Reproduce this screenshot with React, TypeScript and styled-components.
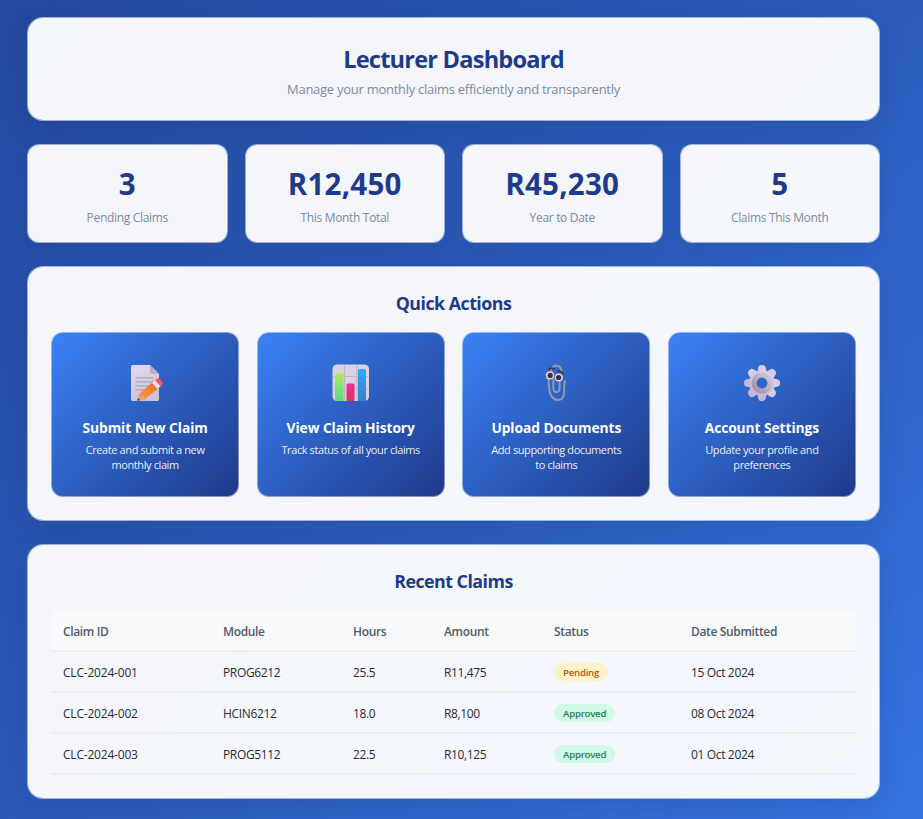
import React from "react";
import styled, { createGlobalStyle } from "styled-components";

const GlobalStyle = createGlobalStyle`
  *, *::before, *::after { box-sizing: border-box; }
  body {
    margin: 0;
    font-family: "Segoe UI", "Open Sans", "Noto Sans", sans-serif;
    color: #2b2b2f;
  }
  h1, h2, h3, p { margin: 0; }
`;

const Page = styled.main`
  height: 819px;
  overflow: hidden;
  padding: 17px 43px 0 27px;
  display: flex;
  flex-direction: column;
  gap: 23px;
  background: linear-gradient(135deg, #24499f 0%, #2b5bbb 50%, #3574e2 100%);
`;

const Surface = styled.section`
  flex: none;
  border: 1px solid rgba(255, 255, 255, 0.55);
  border-radius: 16px;
  background: rgba(255, 255, 255, 0.95);
  background-clip: padding-box;
  box-shadow: 0 7px 28px rgba(0, 0, 0, 0.1);
  text-align: center;
`;

const Header = styled(Surface)`
  height: 104px;
  padding-top: 24px;
`;

const Title = styled.h1`
  font-size: 23.6px;
  line-height: 34px;
  font-weight: 700;
  letter-spacing: -0.8px;
  color: #1e3a8a;
`;

const Subtitle = styled.p`
  margin-top: 3px;
  font-size: 13px;
  line-height: 20px;
  letter-spacing: -0.27px;
  color: #7d8b9d;
`;

const Stats = styled.div`
  flex: none;
  display: grid;
  grid-template-columns: repeat(4, 1fr);
  gap: 17px;
`;

const StatCard = styled(Surface)`
  height: 99px;
  padding-top: 19px;
  border-radius: 12px;
  box-shadow: 0 4px 16px rgba(0, 0, 0, 0.08);
`;

const StatValue = styled.div`
  font-size: 29.5px;
  line-height: 40px;
  font-weight: 700;
  letter-spacing: 0.25px;
  color: #1e3a8a;
`;

const StatLabel = styled.div`
  margin-top: 5px;
  font-size: 12px;
  line-height: 18px;
  letter-spacing: -0.32px;
  color: #7d8b9d;
`;

const Panel = styled(Surface)`
  height: 255px;
  padding: 23px;
`;

const PanelTitle = styled.h2`
  height: 26px;
  font-size: 17.8px;
  line-height: 26px;
  font-weight: 700;
  letter-spacing: -0.5px;
  color: #1e3a8a;
`;

const Actions = styled.div`
  display: grid;
  grid-template-columns: repeat(4, 1fr);
  gap: 17.33px;
  margin-top: 16px;
`;

const ActionCard = styled.a`
  display: flex;
  flex-direction: column;
  align-items: center;
  height: 165px;
  padding: 32px 23px 0;
  border: 1px solid rgba(255, 255, 255, 0.45);
  border-radius: 12px;
  background: linear-gradient(135deg, #3b82f6 0%, #1e3a8a 100%) border-box;
  color: #fff;
`;

const ActionTitle = styled.h3`
  margin-top: 17px;
  font-size: 13.8px;
  line-height: 20px;
  font-weight: 700;
  letter-spacing: -0.08px;
  white-space: nowrap;
`;

const ActionText = styled.p`
  margin-top: 4px;
  font-size: 11px;
  line-height: 15px;
  letter-spacing: -0.4px;
  color: rgba(255, 255, 255, 0.92);
`;

const Table = styled.table`
  width: 100%;
  margin-top: 16px;
  border-spacing: 0;
  table-layout: fixed;
  text-align: left;
  font-size: 12px;
  line-height: 16px;
`;

const Column = styled.col<{ $width: number }>`
  width: ${(p) => p.$width}px;
`;

const HeadCell = styled.th`
  height: 42px;
  padding: 3px 12px 0;
  border-bottom: 2px solid #ebeef3;
  background: #f9fafb;
  background-clip: padding-box;
  font-weight: 600;
  letter-spacing: -0.35px;
  color: #505a69;
`;

const Cell = styled.td`
  height: 41px;
  padding: 3px 12px 0;
  border-bottom: 2px solid #ebeef3;
  letter-spacing: -0.35px;

  &:first-child {
    letter-spacing: -0.2px;
  }
`;

const Badge = styled.span<{ $approved: boolean }>`
  display: block;
  width: fit-content;
  height: 18px;
  margin-top: -2px;
  padding: 0 9px;
  border-radius: 9px;
  font-size: 9.7px;
  line-height: 19px;
  letter-spacing: -0.3px;
  font-weight: 600;
  background: ${(p) => (p.$approved ? "#d1fae5" : "#fef3c7")};
  color: ${(p) => (p.$approved ? "#2a7a62" : "#a65a26")};
  letter-spacing: -0.27px;
`;

const IconSvg = styled.svg`
  flex: none;
  display: block;
  width: 36px;
  height: 36px;
  overflow: visible;
`;

const MemoIcon = () => (
  <IconSvg viewBox="0 0 36 36">
    <defs>
      <linearGradient id="paper" x1="0" y1="0" x2="0.3" y2="1">
        <stop offset="0" stopColor="#e2dcea" />
        <stop offset="1" stopColor="#cdc2d6" />
      </linearGradient>
      <linearGradient id="pencil" x1="0" y1="1" x2="1" y2="0">
        <stop offset="0" stopColor="#ffa145" />
        <stop offset="1" stopColor="#f2612d" />
      </linearGradient>
    </defs>
    <path d="M5.500 0H23L32 9v25.500q0 1.500-1.500 1.500H5.500Q4 36 4 34.500V1.500Q4 0 5.500 0Z" fill="url(#paper)" />
    <path d="M23 0l9 9h-7q-2 0-2-2Z" fill="#b7afc2" />
    <path d="M9 12.900h16.500M9 16.900h17M9 20.900h15M9 24.900h10" stroke="#aaa3b3" strokeWidth="1.400" strokeLinecap="round" />
    <path d="M10.500 35.500l2.100-7L26.500 16.500l5.500 6.200L17.500 34.500Z" fill="url(#pencil)" />
    <path d="M12.600 28.500L10.500 35.500l7-1-1.300-3.500-2.500-.2Z" fill="#dca776" />
    <path d="M11.100 33l-.900 2.700 2.800-.4Z" fill="#503044" />
    <path d="M25 17.800l3.300-2.800 5.500 6.100-3.400 2.900Z" fill="#e9dfed" />
    <path d="M28.100 15.200l2-1.600q1.300-1 2.500.2l3 3.500q1 1.200-.2 2.200l-2 1.700Z" fill="#f45b55" />
  </IconSvg>
);

const ChartIcon = () => (
  <IconSvg viewBox="0 0 36 36">
    <defs>
      <linearGradient id="barGreen" x1="0" y1="0" x2="0" y2="1">
        <stop offset="0" stopColor="#b0ea5e" />
        <stop offset="1" stopColor="#5bd58c" />
      </linearGradient>
      <linearGradient id="barRed" x1="0" y1="0" x2="0" y2="1">
        <stop offset="0" stopColor="#ef2b91" />
        <stop offset="1" stopColor="#d83861" />
      </linearGradient>
      <linearGradient id="barBlue" x1="0" y1="0" x2="0" y2="1">
        <stop offset="0" stopColor="#32a9fb" />
        <stop offset="1" stopColor="#387fcb" />
      </linearGradient>
    </defs>
    <rect x="-0.500" y="-0.500" width="36.500" height="36.500" rx="4.500" fill="#d9d2e1" />
    <path d="M11.500 0v36M24 0v36M0 11.500h35.500M0 24h35.500" stroke="#beb7c8" strokeWidth="1.200" />
    <path d="M2 36V10q0-1.500 1.500-1.500h5.500q1.500 0 1.500 1.500v26Z" fill="url(#barGreen)" />
    <path d="M13.500 36V20q0-1.500 1.500-1.500h5q1.500 0 1.500 1.500v16Z" fill="url(#barRed)" />
    <path d="M25 36V5.500q0-1.500 1.500-1.500h5q1.500 0 1.500 1.500V36Z" fill="url(#barBlue)" />
  </IconSvg>
);

const ClipIcon = () => (
  <IconSvg viewBox="0 0 36 36" fill="none">
    <path
      d="M13 5.500Q14 .8 18.500 .8q4.800 0 5 6.200M10.500 14l.4 8c.4 8 4 13 9.200 13 4.200 0 6-3 6-8.500q0-5 .6-10.500M15.300 14.500v7.500c0 3.400 1.200 5.300 3.200 5.300 2.200 0 3.100-1.700 3.100-5v-6"
      stroke="#969ca3"
      strokeWidth="1.900"
      strokeLinecap="round"
    />
    <circle cx="12" cy="10.400" r="4.100" fill="#ddd6e2" />
    <circle cx="20.800" cy="12.500" r="4.100" fill="#ddd6e2" />
    <circle cx="12.200" cy="10.400" r="2.600" fill="#402b32" />
    <circle cx="20.600" cy="12.500" r="2.600" fill="#402b32" />
    <path d="M11 4.400q2.500-2 5-.5M20.300 6.200q3-.2 4.700 2.300" stroke="#493842" strokeWidth="2" strokeLinecap="round" />
  </IconSvg>
);

const teeth = [0, 45, 90, 135, 180, 225, 270, 315];

const GearIcon = () => (
  <IconSvg viewBox="0 0 36 36">
    <defs>
      <linearGradient id="gearBody" gradientUnits="userSpaceOnUse" x1="26" y1="4" x2="10" y2="32">
        <stop offset="0" stopColor="#ddd4e8" />
        <stop offset="1" stopColor="#c1aed6" />
      </linearGradient>
      <linearGradient id="gearRing" x1="1" y1="0" x2="0" y2="1">
        <stop offset="0" stopColor="#d1cad8" />
        <stop offset="1" stopColor="#9690a4" />
      </linearGradient>
    </defs>
    {teeth.map((angle) => (
      <path
        key={angle}
        d="M12.800 9l1.400-6.200Q14.800 0 17.300 0h1.400q2.500 0 3.100 2.800L23.200 9Z"
        transform={`rotate(${angle} 18 18)`}
        fill={angle > 135 && angle < 300 ? "#c7b7dc" : "#d7cce4"}
      />
    ))}
    <circle cx="18" cy="18" r="10" fill="none" stroke="url(#gearBody)" strokeWidth="5" />
    <circle cx="18" cy="18" r="7.900" fill="none" stroke="url(#gearRing)" strokeWidth="5" />
  </IconSvg>
);

const stats = [
  { value: "3", label: "Pending Claims" },
  { value: "R12,450", label: "This Month Total" },
  { value: "R45,230", label: "Year to Date" },
  { value: "5", label: "Claims This Month" },
];

const actions = [
  { Icon: MemoIcon, title: "Submit New Claim", text: "Create and submit a new monthly claim" },
  { Icon: ChartIcon, title: "View Claim History", text: "Track status of all your claims" },
  { Icon: ClipIcon, title: "Upload Documents", text: "Add supporting documents to claims" },
  { Icon: GearIcon, title: "Account Settings", text: "Update your profile and preferences" },
];

const columns = [
  { name: "Claim ID", width: 160 },
  { name: "Module", width: 130 },
  { name: "Hours", width: 91 },
  { name: "Amount", width: 110 },
  { name: "Status", width: 137 },
  { name: "Date Submitted", width: 177 },
];

const claims = [
  { id: "CLC-2024-001", module: "PROG6212", hours: "25.5", amount: "R11,475", status: "Pending", date: "15 Oct 2024" },
  { id: "CLC-2024-002", module: "HCIN6212", hours: "18.0", amount: "R8,100", status: "Approved", date: "08 Oct 2024" },
  { id: "CLC-2024-003", module: "PROG5112", hours: "22.5", amount: "R10,125", status: "Approved", date: "01 Oct 2024" },
];

export default function App() {
  return (
    <>
      <GlobalStyle />
      <Page>
        <Header as="header">
          <Title>Lecturer Dashboard</Title>
          <Subtitle>Manage your monthly claims efficiently and transparently</Subtitle>
        </Header>
        <Stats>
          {stats.map((s) => (
            <StatCard key={s.label} as="div">
              <StatValue>{s.value}</StatValue>
              <StatLabel>{s.label}</StatLabel>
            </StatCard>
          ))}
        </Stats>
        <Panel>
          <PanelTitle>Quick Actions</PanelTitle>
          <Actions>
            {actions.map(({ Icon, title, text }) => (
              <ActionCard key={title}>
                <Icon />
                <ActionTitle>{title}</ActionTitle>
                <ActionText>{text}</ActionText>
              </ActionCard>
            ))}
          </Actions>
        </Panel>
        <Panel>
          <PanelTitle>Recent Claims</PanelTitle>
          <Table>
            <colgroup>
              {columns.map((c) => (
                <Column key={c.name} $width={c.width} />
              ))}
            </colgroup>
            <thead>
              <tr>
                {columns.map((c) => (
                  <HeadCell key={c.name}>{c.name}</HeadCell>
                ))}
              </tr>
            </thead>
            <tbody>
              {claims.map((c) => (
                <tr key={c.id}>
                  <Cell>{c.id}</Cell>
                  <Cell>{c.module}</Cell>
                  <Cell>{c.hours}</Cell>
                  <Cell>{c.amount}</Cell>
                  <Cell>
                    <Badge $approved={c.status === "Approved"}>{c.status}</Badge>
                  </Cell>
                  <Cell>{c.date}</Cell>
                </tr>
              ))}
            </tbody>
          </Table>
        </Panel>
      </Page>
    </>
  );
}
